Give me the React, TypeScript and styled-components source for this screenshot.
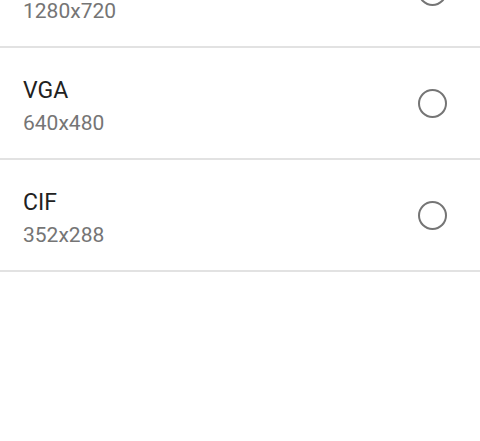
import React from "react";
import styled, { createGlobalStyle } from "styled-components";

interface Resolution {
  name: string;
  size: string;
}

const resolutions: Resolution[] = [
  { name: "HD", size: "1280x720" },
  { name: "VGA", size: "640x480" },
  { name: "CIF", size: "352x288" },
];

const App = () => {
  return (
    <>
      <GlobalStyle />
      <List>
        {resolutions.map((r) => (
          <Row key={r.name}>
            <TextBlock>
              <Title>{r.name}</Title>
              <Subtitle>{r.size}</Subtitle>
            </TextBlock>
            <Radio />
          </Row>
        ))}
      </List>
    </>
  );
};

export default App;

const GlobalStyle = createGlobalStyle`
  html, body {
    margin: 0;
    padding: 0;
    background: #ffffff;
    overflow: hidden;
  }
  body {
    font-family: Roboto, "Liberation Sans", sans-serif;
  }
`;

const List = styled.div`
  margin-top: -64px;
`;

const Row = styled.div`
  display: flex;
  align-items: center;
  justify-content: space-between;
  height: 110px;
  padding: 0 33px 0 23px;
  border-bottom: 2px solid #e2e2e2;
`;

const TextBlock = styled.div`
  display: flex;
  flex-direction: column;
  margin-top: 8px;
`;

const Title = styled.div`
  font-size: 23px;
  line-height: 32px;
  color: #212121;
`;

const Subtitle = styled.div`
  font-size: 21px;
  line-height: 32px;
  color: #757575;
`;

const Radio = styled.div`
  box-sizing: border-box;
  width: 29px;
  height: 29px;
  border-radius: 50%;
  border: 2.8px solid #757575;
`;
